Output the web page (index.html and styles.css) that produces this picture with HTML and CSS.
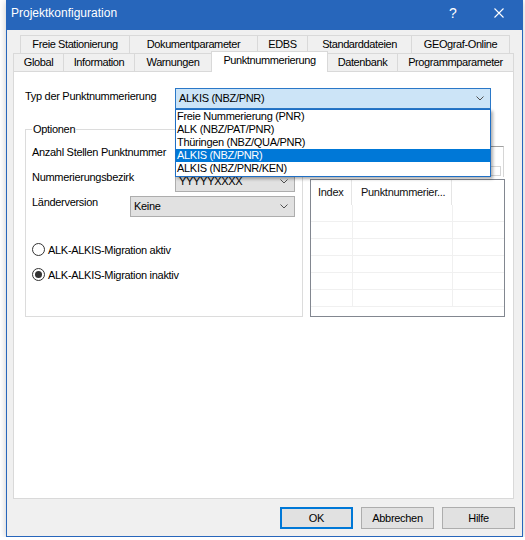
FILE: index.html
```html
<!DOCTYPE html>
<html lang="de">
<head>
<meta charset="utf-8">
<title>Projektkonfiguration</title>
<link rel="stylesheet" href="styles.css">
</head>
<body>
<div class="window">
  <header class="titlebar">
    <span class="title">Projektkonfiguration</span>
    <span class="tb-help">?</span>
    <span class="tb-close">
      <svg width="10" height="10" viewBox="0 0 10 10"><path d="M0.5 0.5L9.5 9.5M9.5 0.5L0.5 9.5" stroke="#fff" stroke-width="1.1" fill="none"/></svg>
    </span>
  </header>

  <div class="client">
    <div class="tabs">
      <div class="tab-row row-back">
        <div class="tab">Freie Stationierung</div>
        <div class="tab">Dokumentparameter</div>
        <div class="tab">EDBS</div>
        <div class="tab">Standarddateien</div>
        <div class="tab">GEOgraf-Online</div>
      </div>
      <div class="tab-row row-front">
        <div class="tab">Global</div>
        <div class="tab">Information</div>
        <div class="tab">Warnungen</div>
        <div class="tab active">Punktnummerierung</div>
        <div class="tab">Datenbank</div>
        <div class="tab">Programmparameter</div>
      </div>
    </div>

    <div class="pane">
      <div class="type-row">
        <span class="label type-label">Typ der Punktnummerierung</span>
        <div class="combo open">
          <span class="combo-value">ALKIS (NBZ/PNR)</span>
          <svg class="chev" width="8" height="5" viewBox="0 0 8 5"><polyline points="0.5,0.5 4,4 7.5,0.5" fill="none" stroke="#505050" stroke-width="1"/></svg>
          <ul class="dropdown">
            <li>Freie Nummerierung (PNR)</li>
            <li>ALK (NBZ/PAT/PNR)</li>
            <li>Thüringen (NBZ/QUA/PNR)</li>
            <li class="selected">ALKIS (NBZ/PNR)</li>
            <li>ALKIS (NBZ/PNR/KEN)</li>
          </ul>
        </div>
      </div>

      <div class="lower">
        <fieldset class="group">
          <legend>Optionen</legend>
          <div class="field">
            <span class="label lbl-wide">Anzahl Stellen Punktnummer</span>
            <div class="combo w-short">
              <svg class="chev" width="8" height="5" viewBox="0 0 8 5"><polyline points="0.5,0.5 4,4 7.5,0.5" fill="none" stroke="#505050" stroke-width="1"/></svg>
            </div>
          </div>
          <div class="field">
            <span class="label lbl-wide">Nummerierungsbezirk</span>
            <div class="combo w-short">
              <span class="combo-value">YYYYYXXXX</span>
              <svg class="chev" width="8" height="5" viewBox="0 0 8 5"><polyline points="0.5,0.5 4,4 7.5,0.5" fill="none" stroke="#505050" stroke-width="1"/></svg>
            </div>
          </div>
          <div class="field">
            <span class="label lbl-narrow">Länderversion</span>
            <div class="combo w-long">
              <span class="combo-value">Keine</span>
              <svg class="chev" width="8" height="5" viewBox="0 0 8 5"><polyline points="0.5,0.5 4,4 7.5,0.5" fill="none" stroke="#505050" stroke-width="1"/></svg>
            </div>
          </div>

          <div class="radios">
            <label class="radio"><span class="circle"></span>ALK-ALKIS-Migration aktiv</label>
            <label class="radio"><span class="circle checked"></span>ALK-ALKIS-Migration inaktiv</label>
          </div>
        </fieldset>

        <div class="side">
          <div class="frame"><div class="frame-bar"></div></div>
          <div class="listview">
            <div class="lv-head"><span>Index</span><span>Punktnummerier...</span><span></span></div>
            <div class="lv-row"><span></span><span></span><span></span></div>
            <div class="lv-row"><span></span><span></span><span></span></div>
            <div class="lv-row"><span></span><span></span><span></span></div>
            <div class="lv-row"><span></span><span></span><span></span></div>
            <div class="lv-row"><span></span><span></span><span></span></div>
            <div class="lv-row"><span></span><span></span><span></span></div>
          </div>
        </div>
      </div>
    </div>

    <div class="buttons">
      <button class="btn default">OK</button>
      <button class="btn">Abbrechen</button>
      <button class="btn">Hilfe</button>
    </div>
  </div>
</div>
</body>
</html>
```

FILE: styles.css
```css
html, body {
  margin: 0;
  padding: 0;
}

body {
  background: #ffffff;
  font-family: "Liberation Sans", Arial, sans-serif;
  font-size: 11px;
  letter-spacing: -0.3px;
  color: #000;
}

/* dialog frame */
.window {
  margin-left: 6px;
  width: 517px;
  height: 537px;
  box-sizing: border-box;
  border: 1px solid #2766bb;
  box-shadow: 0 1px 7px rgba(0, 0, 0, 0.22);
  display: flex;
  flex-direction: column;
}

.titlebar {
  height: 29px;
  flex: none;
  background: #2766bb;
  color: #fff;
  display: flex;
  align-items: flex-start;
  font-size: 12px;
  letter-spacing: 0;
}

.title {
  padding-left: 4px;
  line-height: 24px;
}

.tb-help {
  margin-left: auto;
  width: 46px;
  text-align: center;
  font-size: 14px;
  line-height: 24px;
}

.tb-close {
  width: 46px;
  display: flex;
  justify-content: center;
  padding-top: 7px;
}

.tb-close svg {
  display: block;
}

.client {
  flex: 1;
  background: #f0f0f0;
  padding-top: 5px;
}

/* tab strip */
.tab-row {
  display: grid;
  grid-auto-rows: 18px;
}

.row-back {
  margin-left: 13px;
  grid-template-columns: 109px 128px 50px 104px 99px;
}

.row-front {
  margin-left: 6px;
  grid-template-columns: 50px 71px 77px 116px 70px 117px;
}

.tab {
  box-sizing: border-box;
  height: 18px;
  border: 1px solid #d9d9d9;
  border-bottom: none;
  border-right: none;
  padding-top: 2px;
  line-height: 13px;
  text-align: center;
  white-space: nowrap;
  letter-spacing: -0.4px;
  background: #f0f0f0;
}

.tab:last-child {
  border-right: 1px solid #d9d9d9;
}

.tab.active {
  position: relative;
  z-index: 1;
  align-self: start;
  height: 21px;
  margin-top: -2px;
  margin-right: -1px;
  border-right: 1px solid #d9d9d9;
  background: #fff;
}

/* tab page */
.pane {
  margin-left: 6px;
  width: 501px;
  height: 428px;
  box-sizing: border-box;
  border: 1px solid #d9d9d9;
  background: #fff;
  padding: 16px 0 0 11px;
}

.label {
  flex: none;
  line-height: 13px;
  white-space: nowrap;
}

.type-row {
  display: flex;
  align-items: flex-start;
}

.type-label {
  width: 150px;
  padding-top: 2px;
}

/* combo boxes */
.combo {
  position: relative;
  flex: none;
  box-sizing: border-box;
  height: 21px;
  border: 1px solid #adadad;
  background: #e1e1e1;
  display: flex;
  align-items: center;
  padding-left: 3px;
}

.combo-value {
  line-height: 13px;
  white-space: nowrap;
}

.chev {
  display: block;
  margin-left: auto;
  margin-right: 6px;
}

.combo.open {
  width: 316px;
  border-color: #2a78c8;
  background: #cce4f7;
}

.w-short {
  width: 120px;
}

.w-long {
  width: 165px;
}

.dropdown {
  position: absolute;
  z-index: 10;
  left: -1px;
  top: calc(100% + 1px);
  width: 316px;
  box-sizing: border-box;
  margin: 0;
  padding: 0 0 1px 0;
  list-style: none;
  background: #fff;
  border: 1px solid #1f6fc5;
  box-shadow: 2px 2px 3px rgba(0, 0, 0, 0.32);
}

.dropdown li {
  height: 13px;
  line-height: 13px;
  padding-left: 1px;
  white-space: nowrap;
}

.dropdown li.selected {
  background: #0078d7;
  color: #fff;
}

/* options group + list */
.lower {
  display: flex;
  align-items: stretch;
  gap: 7px;
  margin-top: 14px;
}

.group {
  margin: 0;
  width: 278px;
  min-width: 0;
  box-sizing: border-box;
  border: 1px solid #dcdcdc;
  padding: 10px 6px 0 6px;
}

.group legend {
  padding: 0 1px;
  line-height: 13px;
}

.field {
  display: flex;
  align-items: flex-start;
  height: 21px;
  margin-bottom: 4px;
}

.lbl-wide {
  width: 143px;
}

.lbl-narrow {
  width: 98px;
}

.radios {
  margin-top: 24px;
  display: flex;
  flex-direction: column;
  gap: 8px;
}

.radio {
  display: flex;
  align-items: center;
  gap: 3px;
  height: 17px;
  white-space: nowrap;
}

.circle {
  position: relative;
  width: 13px;
  height: 13px;
  box-sizing: border-box;
  border: 1px solid #333;
  border-radius: 50%;
  background: #fff;
  flex: none;
}

.circle.checked::after {
  content: "";
  position: absolute;
  left: 2px;
  top: 2px;
  width: 7px;
  height: 7px;
  border-radius: 50%;
  background: #333;
}

.side {
  width: 195px;
  margin-top: 23px;
  display: flex;
  flex-direction: column;
}

.frame {
  width: 194px;
  height: 31px;
  box-sizing: border-box;
  border-top: 1px solid #a0a0a0;
  border-right: 1px solid #d6d6d6;
  display: flex;
  align-items: flex-end;
  padding: 0 2px 1px 2px;
}

.frame-bar {
  flex: 1;
  height: 8px;
  border: 1px solid #d6d6d6;
}

.listview {
  margin-top: 2px;
  height: 138px;
  box-sizing: border-box;
  border: 1px solid #828790;
  overflow: hidden;
}

.lv-head {
  display: grid;
  grid-template-columns: 41px 100px 1fr;
  height: 25px;
  line-height: 25px;
  color: #101010;
}

.lv-head span {
  padding-left: 7px;
  white-space: nowrap;
}

.lv-head span:nth-child(2) {
  padding-left: 9px;
}

.lv-head span:nth-child(-n+2) {
  border-right: 1px solid #e5e5e5;
}

.lv-row {
  display: grid;
  grid-template-columns: 42px 100px 1fr;
  height: 17px;
  box-sizing: border-box;
  border-bottom: 1px solid #f0f0f0;
}

.lv-row span:nth-child(-n+2) {
  border-right: 1px solid #f0f0f0;
}

/* dialog buttons */
.buttons {
  display: flex;
  justify-content: flex-end;
  gap: 8px;
  margin-top: 8px;
  padding-right: 7px;
}

.btn {
  width: 73px;
  height: 22px;
  box-sizing: border-box;
  border: 1px solid #adadad;
  background: #e1e1e1;
  font-family: "Liberation Sans", Arial, sans-serif;
  font-size: 11px;
  letter-spacing: -0.3px;
  color: #000;
  padding: 0;
}

.btn.default {
  border: 2px solid #0078d7;
}
```
